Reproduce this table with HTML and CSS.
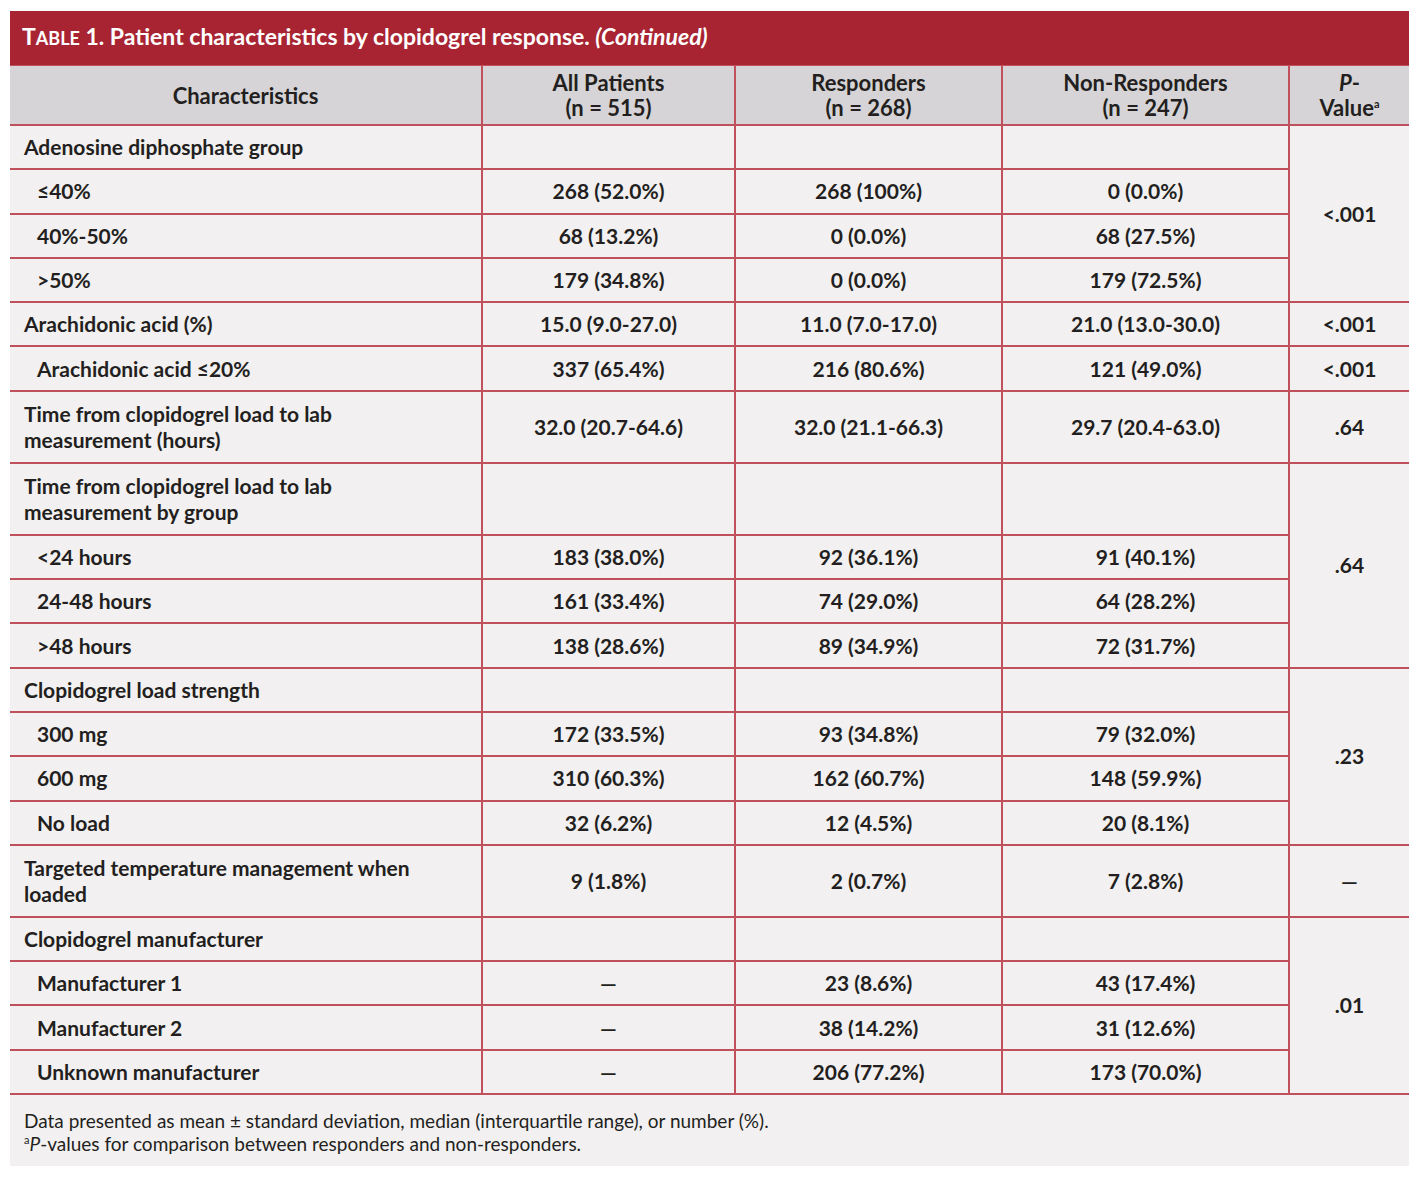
FILE: index.html
```html
<!DOCTYPE html>
<html>
<head>
<meta charset="utf-8">
<link rel="stylesheet" href="styles.css">
</head>
<body>
<div class="wrap">
  <div class="title"><span class="tlabel">T<span class="sc">ABLE</span> 1.</span> Patient characteristics by clopidogrel response. <em>(Continued)</em></div>
  <table class="tbl">
    <colgroup>
      <col class="c1"><col class="c2"><col class="c3"><col class="c4"><col class="c5">
    </colgroup>
    <thead>
      <tr>
        <th>Characteristics</th>
        <th>All Patients<br>(n = 515)</th>
        <th>Responders<br>(n = 268)</th>
        <th>Non-Responders<br>(n = 247)</th>
        <th><em>P</em>-<br>Value<sup>a</sup></th>
      </tr>
    </thead>
    <tbody>
      <tr><td class="lab">Adenosine diphosphate group</td><td></td><td></td><td></td><td rowspan="4">&lt;.001</td></tr>
      <tr><td class="lab ind">≤40%</td><td>268 (52.0%)</td><td>268 (100%)</td><td>0 (0.0%)</td></tr>
      <tr><td class="lab ind">40%-50%</td><td>68 (13.2%)</td><td>0 (0.0%)</td><td>68 (27.5%)</td></tr>
      <tr><td class="lab ind">&gt;50%</td><td>179 (34.8%)</td><td>0 (0.0%)</td><td>179 (72.5%)</td></tr>
      <tr><td class="lab">Arachidonic acid (%)</td><td>15.0 (9.0-27.0)</td><td>11.0 (7.0-17.0)</td><td>21.0 (13.0-30.0)</td><td>&lt;.001</td></tr>
      <tr><td class="lab ind">Arachidonic acid ≤20%</td><td>337 (65.4%)</td><td>216 (80.6%)</td><td>121 (49.0%)</td><td>&lt;.001</td></tr>
      <tr class="two"><td class="lab">Time from clopidogrel load to lab<br>measurement (hours)</td><td>32.0 (20.7-64.6)</td><td>32.0 (21.1-66.3)</td><td>29.7 (20.4-63.0)</td><td>.64</td></tr>
      <tr class="two"><td class="lab">Time from clopidogrel load to lab<br>measurement by group</td><td></td><td></td><td></td><td rowspan="4">.64</td></tr>
      <tr><td class="lab ind">&lt;24 hours</td><td>183 (38.0%)</td><td>92 (36.1%)</td><td>91 (40.1%)</td></tr>
      <tr><td class="lab ind">24-48 hours</td><td>161 (33.4%)</td><td>74 (29.0%)</td><td>64 (28.2%)</td></tr>
      <tr><td class="lab ind">&gt;48 hours</td><td>138 (28.6%)</td><td>89 (34.9%)</td><td>72 (31.7%)</td></tr>
      <tr><td class="lab">Clopidogrel load strength</td><td></td><td></td><td></td><td rowspan="4">.23</td></tr>
      <tr><td class="lab ind">300 mg</td><td>172 (33.5%)</td><td>93 (34.8%)</td><td>79 (32.0%)</td></tr>
      <tr><td class="lab ind">600 mg</td><td>310 (60.3%)</td><td>162 (60.7%)</td><td>148 (59.9%)</td></tr>
      <tr><td class="lab ind">No load</td><td>32 (6.2%)</td><td>12 (4.5%)</td><td>20 (8.1%)</td></tr>
      <tr class="two"><td class="lab">Targeted temperature management when<br>loaded</td><td>9 (1.8%)</td><td>2 (0.7%)</td><td>7 (2.8%)</td><td>—</td></tr>
      <tr><td class="lab">Clopidogrel manufacturer</td><td></td><td></td><td></td><td rowspan="4">.01</td></tr>
      <tr><td class="lab ind">Manufacturer 1</td><td>—</td><td>23 (8.6%)</td><td>43 (17.4%)</td></tr>
      <tr><td class="lab ind">Manufacturer 2</td><td>—</td><td>38 (14.2%)</td><td>31 (12.6%)</td></tr>
      <tr class="last"><td class="lab ind">Unknown manufacturer</td><td>—</td><td>206 (77.2%)</td><td>173 (70.0%)</td></tr>
    </tbody>
  </table>
  <div class="foot">
    <p>Data presented as mean ± standard deviation, median (interquartile range), or number (%).</p>
    <p><sup>a</sup><em>P</em>-values for comparison between responders and non-responders.</p>
  </div>
</div>
</body>
</html>
```
FILE: styles.css
```css
html, body {
  margin: 0;
  padding: 0;
  background: #ffffff;
}
body {
  font-family: Lato, "Noto Sans", sans-serif;
  color: #231f20;
}
.wrap {
  margin: 11px 11px 0 10px;
  width: 1399px;
  background: #f2f0f1;
}
.title {
  background: #a82432;
  color: #ffffff;
  height: 55px;
  box-sizing: border-box;
  padding: 11px 0 0 12px;
  font-size: 23px;
  font-weight: 700;
  line-height: 28px;
  border-bottom: 1px solid #c0505c;
}
.title .sc {
  font-size: 18px;
}
.title em {
  font-style: italic;
}
.tbl {
  width: 1399px;
  border-collapse: collapse;
  table-layout: fixed;
  font-size: 21px;
  font-weight: 700;
}
.c1 { width: 472px; }
.c2 { width: 253px; }
.c3 { width: 267px; }
.c4 { width: 287px; }
.c5 { width: 120px; }
.tbl th {
  background: #d6d4d6;
  height: 58px;
  padding: 0;
  font-size: 22px;
  font-weight: 700;
  line-height: 25px;
  text-align: center;
  vertical-align: middle;
  border-left: 2px solid #c0505c;
  border-bottom: 2px solid #c0505c;
}
.tbl th:first-child { border-left: none; }
.tbl th sup, .foot sup {
  font-size: 11px;
  line-height: 1;
  vertical-align: super;
}
.tbl td {
  height: 42.3px;
  padding: 0;
  text-align: center;
  vertical-align: middle;
  line-height: 26px;
  border-left: 2px solid #c0505c;
  border-bottom: 2px solid #c0505c;
}
.tbl td.lab {
  text-align: left;
  padding-left: 14px;
  border-left: none;
}
.tbl td.lab.ind {
  padding-left: 27px;
}
.tbl tr.two td {
  height: 70px;
}
.foot {
  padding: 14px 14px 11px 14px;
  font-size: 19px;
  line-height: 23px;
  font-weight: 400;
}
.foot p {
  margin: 0;
}
```
